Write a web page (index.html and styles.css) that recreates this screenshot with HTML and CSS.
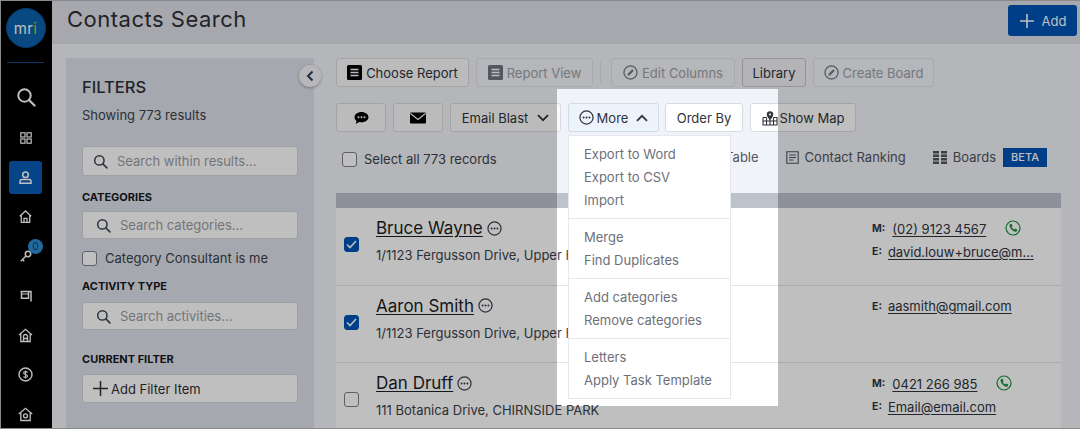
FILE: index.html
```html
<!DOCTYPE html>
<html>
<head>
<meta charset="UTF-8">
<title>Contacts Search</title>
<link rel="stylesheet" href="styles.css">
</head>
<body>
<svg class="defs">
  <symbol id="i-search" viewBox="0 0 20 20"><circle cx="8.5" cy="8.5" r="6.2" fill="none" stroke="currentColor" stroke-width="2"/><path d="M13 13l5.5 5.5" stroke="currentColor" stroke-width="2.2" stroke-linecap="round"/></symbol>
  <symbol id="i-more" viewBox="0 0 16 16"><circle cx="8" cy="8" r="7" fill="none" stroke="currentColor" stroke-width="1.3"/><circle cx="4.9" cy="8" r="1.05" fill="currentColor"/><circle cx="8" cy="8" r="1.05" fill="currentColor"/><circle cx="11.1" cy="8" r="1.05" fill="currentColor"/></symbol>
  <symbol id="i-report" viewBox="0 0 15 15"><rect width="15" height="15" rx="1.5" fill="currentColor"/><path d="M3.5 4.5h8M3.5 7.5h8M3.5 10.5h8" stroke="#fff" stroke-width="1.4"/></symbol>
  <symbol id="i-edit" viewBox="0 0 16 16"><circle cx="8" cy="8" r="7" fill="none" stroke="currentColor" stroke-width="1.3"/><path d="M4.6 11.4l.6-2.2 4.6-4.6 1.6 1.6-4.6 4.6z" fill="currentColor"/></symbol>
  <symbol id="i-phone" viewBox="0 0 16 16"><circle cx="8" cy="8" r="7" fill="none" stroke="#18923c" stroke-width="1.2"/><path d="M5 4.2l1.6-.5 1 2.2-.9.9c.3 1 1.4 2.2 2.5 2.6l.9-.9 2.1 1.1-.5 1.6c-.3.5-1 .7-1.6.5C7.500 10.800 5.200 8.500 4.500 5.900c-.1-.6.100-1.300.5-1.700z" fill="#18923c"/></symbol>
</svg>

<div class="app">
  <nav class="sidebar">
    <div class="logo"><span>mr<em>i</em></span></div>
    <div class="side-line"></div>
    <svg class="nav-search" width="20" height="20"><use href="#i-search"/></svg>
    <div class="nav-item">
      <svg width="12" height="12" viewBox="0 0 12 12" fill="none" stroke="currentColor" stroke-width="1.2"><rect x=".8" y=".8" width="4.200" height="4.200"/><rect x="7" y=".8" width="4.200" height="4.200"/><rect x=".8" y="7" width="4.200" height="4.200"/><rect x="7" y="7" width="4.200" height="4.200"/></svg>
    </div>
    <div class="nav-item active">
      <svg width="13" height="13" viewBox="0 0 13 13" fill="none" stroke="currentColor" stroke-width="1.5"><circle cx="6.500" cy="3.700" r="2.800"/><path d="M1 12.200V10.500c0-1.300 1-2 2-2h7c1 0 2 .7 2 2v1.700z"/></svg>
    </div>
    <div class="nav-item">
      <svg width="13" height="13" viewBox="0 0 13 13" fill="none" stroke="currentColor" stroke-width="1.300"><path d="M.8 6.300L6.500 1l5.700 5.300M2.300 5.500v6.800h8.400V5.500M5 12.300V8.300h3v4"/></svg>
    </div>
    <div class="nav-item">
      <svg width="14" height="14" viewBox="0 0 14 14" fill="none" stroke="currentColor" stroke-width="1.500"><circle cx="9" cy="5" r="2.700"/><path d="M7 7L1.800 12.200M3.500 10.500l1.700 1.700"/></svg>
      <span class="badge">0</span>
    </div>
    <div class="nav-item">
      <svg width="12" height="12" viewBox="0 0 12 12" fill="none" stroke="currentColor" stroke-width="1.500"><path d="M.5 1.500h10.500v10M1.500 1.500v6.800h7V1.500"/><path d="M1.500 4h7" stroke-width="1"/></svg>
    </div>
    <div class="nav-item">
      <svg width="15" height="15" viewBox="0 0 15 15" fill="none" stroke="currentColor" stroke-width="1.300"><path d="M1 7L7.500 1.300 14 7M2.800 5.800v7.700h9.400V5.800"/><path d="M5.500 13.500V8.500a2 2 0 0 1 4 0v5M5.500 10.500h4"/></svg>
    </div>
    <div class="nav-item">
      <svg width="15" height="15" viewBox="0 0 15 15" fill="none" stroke="currentColor" stroke-width="1.400"><circle cx="7.500" cy="7.500" r="6.500"/><path d="M9.500 5.600C9 4.800 8.300 4.600 7.500 4.600 6.500 4.600 5.600 5.100 5.600 6s.9 1.300 1.900 1.500 2 .6 2 1.500-.9 1.400-2 1.400c-.8 0-1.600-.3-2-1M7.500 3.500v8" stroke-width="1.100"/></svg>
    </div>
    <div class="nav-item">
      <svg width="15" height="15" viewBox="0 0 15 15" fill="none" stroke="currentColor" stroke-width="1.300"><path d="M.8 7L7.500 1.300 14.200 7M2.800 5.800v7.700h9.400V5.800"/><circle cx="7.500" cy="8.800" r="2"/></svg>
    </div>
  </nav>

  <div class="content">
    <header class="topbar">
      <h1>Contacts Search</h1>
      <button class="add-btn"><svg width="16" height="16" viewBox="0 0 16 16"><path d="M8 1v14M1 8h14" stroke="currentColor" stroke-width="1.600"/></svg>Add</button>
    </header>

    <div class="page">
      <aside class="filters">
        <span class="collapse"><svg width="8" height="12" viewBox="0 0 8 12" fill="none" stroke="currentColor" stroke-width="2"><path d="M6.500 1.500L2 6l4.500 4.500"/></svg></span>
        <h2>FILTERS</h2>
        <p class="showing">Showing 773 results</p>
        <div class="search first"><svg width="15" height="15"><use href="#i-search"/></svg>Search within results...</div>
        <h3 class="cat-title">CATEGORIES</h3>
        <div class="search short"><svg width="15" height="15"><use href="#i-search"/></svg>Search categories...</div>
        <label class="check-line"><span class="box"></span>Category Consultant is me</label>
        <h3 class="act-title">ACTIVITY TYPE</h3>
        <div class="search short"><svg width="15" height="15"><use href="#i-search"/></svg>Search activities...</div>
        <h3 class="cur-title">CURRENT FILTER</h3>
        <button class="add-filter"><svg width="15" height="15" viewBox="0 0 15 15"><path d="M7.500 0v15M0 7.500h15" stroke="currentColor" stroke-width="1.500"/></svg>Add Filter Item</button>
      </aside>

      <section class="results">
        <div class="tools tools-top">
          <button class="btn w-choose"><svg class="ico" width="15" height="15"><use href="#i-report"/></svg>Choose Report</button>
          <button class="btn off w-view"><svg class="ico" width="15" height="15"><use href="#i-report"/></svg>Report View</button>
          <span class="sep"></span>
          <button class="btn off w-columns"><svg class="ico" width="15" height="15"><use href="#i-edit"/></svg>Edit Columns</button>
          <button class="btn w-library lib">Library</button>
          <button class="btn off w-board"><svg class="ico" width="15" height="15"><use href="#i-edit"/></svg>Create Board</button>
        </div>
        <div class="tools tools-second">
          <button class="btn w-icon"><svg width="15" height="14" viewBox="0 0 15 14"><path d="M7.500 1C3.500 1 .5 3.300.5 6.200c0 1.500.8 2.800 2.100 3.700L1.700 13l3.500-2.100c.7.200 1.500.300 2.300.300 4 0 7-2.300 7-5S11.500 1 7.500 1z" fill="currentColor"/><circle cx="4.500" cy="6.200" r="1" fill="#fff"/><circle cx="7.500" cy="6.200" r="1" fill="#fff"/><circle cx="10.500" cy="6.200" r="1" fill="#fff"/></svg></button>
          <button class="btn w-icon"><svg width="16" height="12" viewBox="0 0 16 12"><rect y=".5" width="16" height="11" rx="1.200" fill="currentColor"/><path d="M.5 1.500L8 7.500l7.500-6" fill="none" stroke="#fff" stroke-width="1.100"/></svg></button>
          <button class="btn w-blast">Email Blast<svg class="chev" width="12" height="8" viewBox="0 0 12 8" fill="none" stroke="currentColor" stroke-width="1.800"><path d="M1 1.200l5 5 5-5"/></svg></button>
          <div class="more-wrap">
            <button class="btn w-more"><svg class="ico-more" width="15" height="15"><use href="#i-more"/></svg>More<svg class="chev" width="12" height="8" viewBox="0 0 12 8" fill="none" stroke="currentColor" stroke-width="1.800"><path d="M1 6.800l5-5 5 5"/></svg></button>
            <div class="menu">
              <ul>
                <li>Export to Word</li>
                <li>Export to CSV</li>
                <li>Import</li>
              </ul>
              <ul>
                <li>Merge</li>
                <li>Find Duplicates</li>
              </ul>
              <ul>
                <li>Add categories</li>
                <li>Remove categories</li>
              </ul>
              <ul>
                <li>Letters</li>
                <li>Apply Task Template</li>
              </ul>
            </div>
          </div>
          <button class="btn w-order">Order By</button>
          <button class="btn w-map"><svg class="ico-map" width="16" height="16" viewBox="0 0 16 16" fill="none" stroke="currentColor" stroke-width="1.100"><path d="M1 7.500h3.500M11.500 7.500H15V15H1V7.500M1 11h14M4.500 7.500V15M8 9.500V15M11.500 7.500V15"/><path d="M8 9.500C6.500 7.800 5.300 6.400 5.300 4.600a2.700 2.700 0 0 1 5.400 0c0 1.800-1.200 3.200-2.700 4.900z" fill="currentColor"/><circle cx="8" cy="4.500" r="1" fill="#fff" stroke="none"/></svg>Show Map</button>
        </div>
        <div class="views">
          <label class="select-all"><span class="box"></span>Select all 773 records</label>
          <div class="view-links">
            <span>Table</span>
            <span class="rank"><svg width="13" height="13" viewBox="0 0 13 13" fill="none" stroke="currentColor" stroke-width="1.100"><path d="M.8.800h11.400v11.400H.8zM3 4h7M3 6.500h7M3 9h4.500"/></svg>Contact Ranking</span>
            <span class="boards"><svg width="14" height="13" viewBox="0 0 14 13"><path d="M0 0h6v6H0zM8 0h6v6H8zM0 7h6v6H0zM8 7h6v6H8z" fill="currentColor"/><path d="M0 3h14M0 10h14" stroke="#fff" stroke-width=".9"/></svg>Boards<b>BETA</b></span>
          </div>
        </div>

        <div class="table">
          <div class="table-head"></div>
          <article class="row">
            <span class="box on"><svg width="11" height="9" viewBox="0 0 11 9" fill="none" stroke="#fff" stroke-width="1.600"><path d="M1 4.500l3 3L10 1"/></svg></span>
            <div class="person">
              <div class="name"><a>Bruce Wayne</a><svg width="15" height="15"><use href="#i-more"/></svg></div>
              <p>1/1123 Fergusson Drive, Upper Heidelberg</p>
            </div>
            <div class="contact">
              <div class="line"><b>M:</b><a>(02) 9123 4567</a><svg class="call" width="16" height="16"><use href="#i-phone"/></svg></div>
              <div class="line mail"><b>E:</b><a>david.louw+bruce@m...</a></div>
            </div>
          </article>
          <article class="row">
            <span class="box on"><svg width="11" height="9" viewBox="0 0 11 9" fill="none" stroke="#fff" stroke-width="1.600"><path d="M1 4.500l3 3L10 1"/></svg></span>
            <div class="person">
              <div class="name"><a>Aaron Smith</a><svg width="15" height="15"><use href="#i-more"/></svg></div>
              <p>1/1123 Fergusson Drive, Upper Heidelberg</p>
            </div>
            <div class="contact">
              <div class="line mail-only"><b>E:</b><a>aasmith@gmail.com</a></div>
            </div>
          </article>
          <article class="row">
            <span class="box"></span>
            <div class="person">
              <div class="name"><a>Dan Druff</a><svg width="15" height="15"><use href="#i-more"/></svg></div>
              <p>111 Botanica Drive, CHIRNSIDE PARK</p>
            </div>
            <div class="contact">
              <div class="line"><b>M:</b><a>0421 266 985</a><svg class="call" width="16" height="16"><use href="#i-phone"/></svg></div>
              <div class="line mail"><b>E:</b><a>Email@email.com</a></div>
            </div>
          </article>
        </div>
      </section>
    </div>
  </div>

  <div class="spotlight"></div>
</div>
</body>
</html>
```

FILE: styles.css
```css
html, body{
    margin:0;
    padding:0;
}
body{
    font-family:Inter, "Noto Sans", sans-serif;
    font-size:13px;
    color:#3b3f4a;
}
.defs{
    display:none;
}
button{
    font:inherit;
    color:inherit;
}
h1, h2, h3, p, ul{
    margin:0;
    padding:0;
}
.app{
    position:relative;
    display:flex;
    width:1080px;
    height:429px;
    box-sizing:border-box;
    border:1px solid #8a8a8a;
    border-right:0;
    overflow:hidden;
    background:#f0f3f8;
}

/* left rail */
.sidebar{
    flex:none;
    width:51px;
    height:429px;
    background:#000;
    color:#fff;
    display:flex;
    flex-direction:column;
    align-items:center;
}
.logo{
    flex:none;
    width:38px;
    height:38px;
    margin:7px 2px 0 0;
    border-radius:50%;
    background:#0b62ad;
    border:1px solid #0a4f8e;
    display:flex;
    align-items:center;
    justify-content:center;
    font-size:15px;
    letter-spacing:.3px;
}
.logo em{
    font-style:normal;
    color:#9ccb3b;
}
.side-line{
    flex:none;
    width:37px;
    height:1px;
    margin:14px 2px 0 0;
    background:#0d4a86;
}
.nav-search{
    flex:none;
    margin:24px 2px 0 0;
}
.nav-item{
    position:relative;
    flex:none;
    width:33px;
    height:33px;
    margin:0 2px 6.500px 0;
    display:flex;
    align-items:center;
    justify-content:center;
    border-radius:3px;
}
.nav-search + .nav-item{
    margin-top:14px;
}
.nav-item.active{
    background:#0a5bb4;
}
.badge{
    position:absolute;
    top:-1px;
    right:-1px;
    width:15px;
    height:15px;
    border-radius:50%;
    background:#2c8ed6;
    color:#0c3a66;
    font-size:10px;
    line-height:15px;
    text-align:center;
}

/* top bar */
.content{
    flex:1;
    min-width:0;
    display:flex;
    flex-direction:column;
}
.topbar{
    flex:none;
    height:43px;
    background:#dfe1e8;
    display:flex;
    justify-content:space-between;
    padding:0 3px 0 15px;
    box-sizing:border-box;
}
.topbar h1{
    font-size:22px;
    font-weight:400;
    line-height:36px;
    color:#2c2f36;
    letter-spacing:.5px;
}
.add-btn{
    width:69px;
    height:31px;
    margin-top:4px;
    border:0;
    border-radius:3px;
    background:#0054b4;
    color:#fff;
    font-size:13px;
    display:flex;
    align-items:center;
    justify-content:center;
    gap:7px;
}

/* filter panel */
.page{
    flex:1;
    min-height:0;
    display:flex;
    gap:22px;
    padding:14px 0 0 14px;
}
.filters{
    position:relative;
    flex:none;
    width:248px;
    box-sizing:border-box;
    padding:19px 16px 0;
    background:#dde1e9;
}
.collapse{
    position:absolute;
    top:7px;
    right:-7px;
    width:22px;
    height:22px;
    border-radius:50%;
    background:#f4f5f7;
    box-shadow:0 1px 3px rgba(0,0,0,.3);
    display:flex;
    align-items:center;
    justify-content:center;
    color:#2b3c58;
}
.filters h2{
    font-size:16.500px;
    font-weight:500;
    line-height:20px;
    color:#2c2f36;
}
.showing{
    margin-top:8px;
    line-height:20px;
}
.search{
    display:flex;
    align-items:center;
    gap:9px;
    height:28px;
    padding-left:10px;
    border:1px solid #d4d6da;
    border-radius:3px;
    background:#fff;
    color:#9a9da3;
    font-size:13px;
}
.search svg{
    color:#3b4452;
}
.search.first{
    margin-top:21px;
}
.search.short{
    height:26px;
    padding-left:13px;
}
.filters h3{
    font-size:11px;
    font-weight:700;
    line-height:14px;
    color:#16181d;
}
.cat-title{
    margin-top:14px;
    margin-bottom:7px;
}
.check-line{
    display:flex;
    align-items:center;
    gap:8px;
    margin-top:11px;
    line-height:16px;
}
.act-title{
    margin-top:13px;
    margin-bottom:9px;
}
.cur-title{
    margin-top:22px;
    margin-bottom:8px;
}
.add-filter{
    width:100%;
    height:29px;
    padding:0 0 0 10px;
    border:1px solid #d4d6da;
    border-radius:3px;
    background:#fff;
    display:flex;
    align-items:center;
    gap:3px;
    color:#2c2f36;
}
.box{
    flex:none;
    box-sizing:border-box;
    width:15px;
    height:15px;
    border:1px solid #7c818b;
    border-radius:3px;
    background:#fff;
    display:inline-flex;
    align-items:center;
    justify-content:center;
}
.box.on{
    background:#0054b4;
    border-color:#0054b4;
}

/* toolbars */
.results{
    flex:none;
    width:725px;
}
.tools{
    display:flex;
    align-items:center;
    gap:7px;
    height:29px;
}
.tools-second{
    margin-top:16px;
}
.btn{
    flex:none;
    height:29px;
    box-sizing:border-box;
    padding:0;
    border:1px solid #d8dbe1;
    border-radius:3px;
    background:#fafafa;
    display:flex;
    align-items:center;
    justify-content:center;
    color:#2f333c;
}
.btn.off{
    background:#f2f4f8;
    border-color:#dfe2e8;
    color:#9da0a7;
}
.btn.lib{
    background:#f0f1f4;
    border-color:#c3c6cc;
}
.ico{
    margin-right:4px;
    color:#000;
}
.off .ico{
    color:#6f747e;
}
.sep{
    flex:none;
    width:1px;
    height:21px;
    margin:0 3px 0 0;
    background:#dfe2e8;
}
.w-choose{ width:133px; }
.w-view{ width:117px; }
.w-columns{ width:124px; }
.w-library{ width:64px; }
.w-board{ width:121px; }
.w-icon{ width:50px; color:#000; }
.w-blast{ width:111px; gap:9px; }
.w-more{
    width:91px;
    background:#edf3fa;
    border-color:#d3dbe6;
}
.ico-more{
    margin-right:3px;
}
.w-more .chev{
    margin-left:8px;
}
.w-order{
    width:78px;
    background:#fff;
    margin-left:-1px;
}
.w-map{
    width:106px;
    background:#fff;
}
.ico-map{
    margin-right:2px;
}
.more-wrap{
    position:relative;
    flex:none;
}

/* dropdown under More */
.menu{
    position:absolute;
    top:32px;
    left:0;
    z-index:3;
    width:163px;
    box-sizing:border-box;
    border:1px solid #e5e8ee;
    background:#fff;
    color:#6e7079;
}
.menu ul{
    list-style:none;
    padding:7px 0 6px;
    border-top:1px solid #e5e8ee;
}
.menu ul:first-child{
    border-top:0;
}
.menu li{
    height:23px;
    line-height:23px;
    padding-left:15px;
    white-space:nowrap;
}

/* view links */
.views{
    display:flex;
    justify-content:space-between;
    height:61px;
    box-sizing:border-box;
}
.select-all{
    display:flex;
    align-items:center;
    gap:7px;
    height:20px;
    margin:17px 0 0 6px;
}
.view-links{
    display:flex;
    align-items:center;
    gap:27px;
    height:20px;
    margin:15px 14px 0 0;
}
.view-links span{
    display:flex;
    align-items:center;
    gap:6px;
    color:#50545d;
}
.view-links b{
    margin-left:1px;
    width:44px;
    height:19px;
    line-height:19px;
    text-align:center;
    background:#0054b4;
    color:#fff;
    font-size:11px;
    font-weight:500;
}

/* contact rows */
.table-head{
    height:15px;
    background:#bec2cc;
}
.row{
    display:flex;
    height:77.500px;
    box-sizing:border-box;
    background:#fff;
    border-bottom:1px solid #e4e6ea;
}
.row > .box{
    margin:29px 0 0 8px;
}
.person{
    flex:none;
    width:496px;
    margin-left:17px;
    padding-top:9px;
}
.name{
    display:flex;
    align-items:center;
    gap:4px;
    height:22px;
    font-size:17px;
    color:#1c1e24;
}
.name a{
    text-decoration:underline;
    text-underline-offset:2px;
}
.name svg{
    color:#3b3f4a;
}
.person p{
    margin-top:7px;
    line-height:18px;
    white-space:nowrap;
}
.contact{
    padding-top:9px;
}
.line{
    display:flex;
    align-items:center;
    height:23px;
    color:#2f333c;
}
.line b{
    font-size:10.500px;
    font-weight:700;
    margin-right:7px;
}
.line.mail b, .line.mail-only b{
    margin-right:6px;
}
.line a{
    text-decoration:underline;
    text-underline-offset:2px;
    white-space:nowrap;
}
.call{
    margin-left:19px;
    margin-top:-2px;
}

/* the dimmed page around the open menu */
.spotlight{
    position:absolute;
    z-index:5;
    left:556px;
    top:88px;
    width:221px;
    height:317px;
    box-shadow:0 0 0 1200px rgba(0,0,0,.25);
    pointer-events:none;
}
```
